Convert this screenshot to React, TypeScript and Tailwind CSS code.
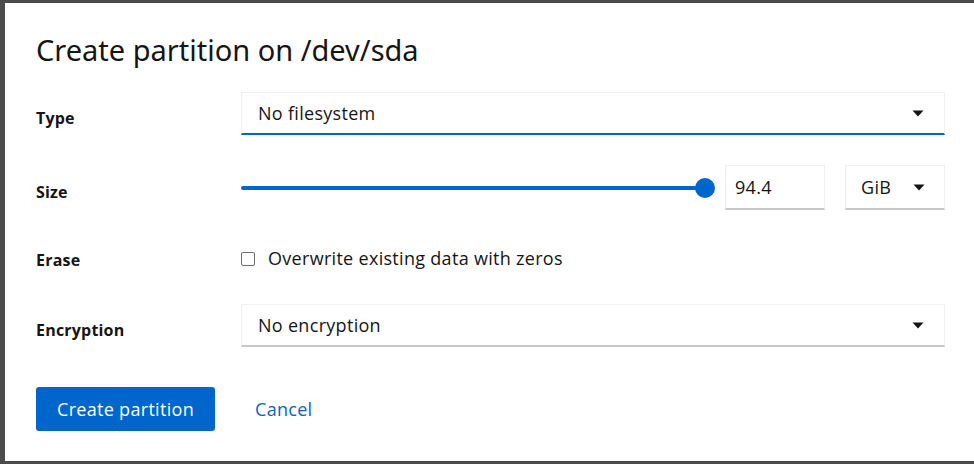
import * as React from "react";

function Caret() {
  return (
    <svg width="12" height="7" viewBox="0 0 12 7" className="shrink-0">
      <path d="M0.5 0.5 L11.5 0.5 L6 6.5 Z" fill="#151515" />
    </svg>
  );
}

function Select({ value, focused }: { value: string; focused?: boolean }) {
  return (
    <div
      className={
        "flex h-[43px] items-center justify-between border border-[#f0f0f0] pl-4 pr-5 " +
        (focused
          ? "border-b-2 border-b-[#0066cc]"
          : "border-b-2 border-b-[#c7c7c7]")
      }
    >
      <span className="text-[18px] tracking-[0.3px] text-[#151515]">{value}</span>
      <Caret />
    </div>
  );
}

function Row({
  label,
  children,
  className,
  labelClass,
}: {
  label: string;
  children: React.ReactNode;
  className?: string;
  labelClass?: string;
}) {
  return (
    <div className={"flex items-center " + (className ?? "")}>
      <div
        className={
          "w-[205px] shrink-0 text-[16px] font-bold tracking-[0.2px] text-[#151515] " +
          (labelClass ?? "pt-2")
        }
      >
        {label}
      </div>
      <div className="flex-1">{children}</div>
    </div>
  );
}

export default function App() {
  return (
    <div
      className="h-[464px] w-[974px] bg-[#4b4b4b] pt-[3px] pb-[3px] pl-[5px]"
      style={{ fontFamily: '"Open Sans", "Liberation Sans", sans-serif' }}
    >
      <div className="flex h-full flex-col bg-white pl-[31px] pr-[29px]">
        <h1
          className="mt-[30px] text-[29px] leading-[34px] text-[#151515]"
          style={{ fontFamily: '"Noto Sans", "Liberation Sans", sans-serif' }}
        >
          Create partition on /dev/sda
        </h1>

        <Row label="Type" className="mt-[25px]">
          <Select value="No filesystem" focused />
        </Row>

        <Row label="Size" className="mt-[30px]">
          <div className="flex items-center">
            <div className="relative flex h-[22px] flex-1 items-center">
              <div className="h-[4px] w-full rounded-full bg-[#0066cc]" />
              <div className="absolute -right-[10px] h-[20px] w-[20px] rounded-full bg-[#0066cc]" />
            </div>
            <div className="ml-[20px] flex h-[45px] w-[100px] items-center border border-[#f0f0f0] border-b-2 border-b-[#c7c7c7] px-[9px] text-[18px] tracking-[0.3px] text-[#151515]">
              94.4
            </div>
            <div className="ml-[20px] flex h-[45px] w-[100px] items-center justify-between border border-[#f0f0f0] border-b-2 border-b-[#c7c7c7] pl-[15px] pr-[19px] text-[18px] tracking-[0.3px] text-[#151515]">
              <span>GiB</span>
              <Caret />
            </div>
          </div>
        </Row>

        <Row label="Erase" className="mt-[35px]" labelClass="pt-[3px]">
          <label className="flex items-center gap-[13px]">
            <span className="h-[14px] w-[14px] rounded-[2px] border border-[#6a6e73] bg-white" />
            <span className="text-[18px] tracking-[0.3px] text-[#151515]">
              Overwrite existing data with zeros
            </span>
          </label>
        </Row>

        <Row label="Encryption" className="mt-[32px]">
          <Select value="No encryption" />
        </Row>

        <div className="mt-[40px] flex items-center">
          <button className="h-[44px] w-[179px] rounded-[3px] bg-[#0066cc] text-[18px] tracking-[0.3px] text-white">
            Create partition
          </button>
          <button className="ml-[40px] text-[18px] tracking-[0.3px] text-[#0066cc]">
            Cancel
          </button>
        </div>
      </div>
    </div>
  );
}
